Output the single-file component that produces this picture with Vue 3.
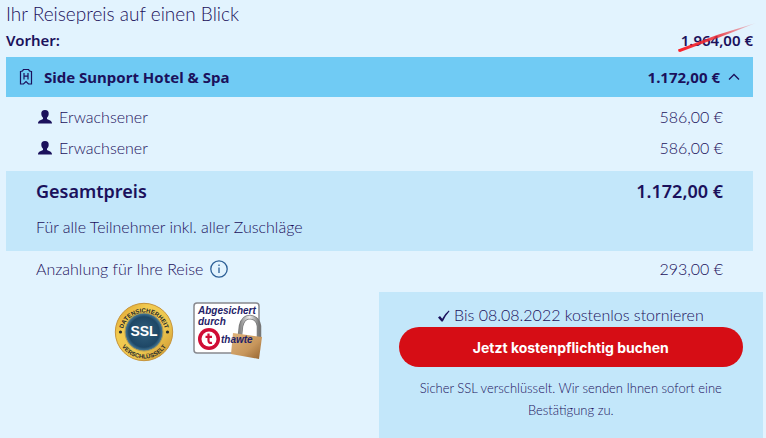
<script setup>
import { ref } from "vue";

const open = ref(true);

const travellers = [
  { name: "Erwachsener", price: "586,00 €" },
  { name: "Erwachsener", price: "586,00 €" },
];
</script>

<template>
  <main class="summary">
    <h1>Ihr Reisepreis auf einen Blick</h1>

    <div class="before">
      <span>Vorher:</span>
      <span class="old-price">
        1.964,00 €
        <svg class="strike" viewBox="0 0 80 32" preserveAspectRatio="none" aria-hidden="true">
          <defs>
            <linearGradient id="strike-fade">
              <stop offset="0" stop-color="#fa2028" />
              <stop offset="0.55" stop-color="#ec2b35" stop-opacity="0.8" />
              <stop offset="1" stop-color="#ec2b35" stop-opacity="0.1" />
            </linearGradient>
          </defs>
          <path d="M1 27.5L40 13L79 1L42 15.5L3 30Q1 30 1 27.5Z" fill="url(#strike-fade)" />
        </svg>
      </span>
    </div>

    <button class="hotel" type="button" :aria-expanded="open" @click="open = !open">
      <svg class="hotel-icon" viewBox="0 0 14 18" aria-hidden="true">
        <path d="M1.5 16V3.5Q4 3.5 4.5 1.5H9.5Q10 3.5 12.5 3.5V16H9.5L7 13.5L4.5 16Z" />
        <path d="M5 5V11.5M9 5V11.5M5 8.2H9" />
      </svg>
      <span class="hotel-name">Side Sunport Hotel &amp; Spa</span>
      <span>1.172,00 €</span>
      <svg class="chevron" :class="{ closed: !open }" viewBox="0 0 12 8" aria-hidden="true">
        <path d="M1 6.5L6 1.5L11 6.5" />
      </svg>
    </button>

    <ul v-if="open" class="travellers">
      <li v-for="(person, index) in travellers" :key="index">
        <svg class="person" viewBox="0 0 14 14" aria-hidden="true">
          <path d="M7 0C9.6 0 10.9 1.6 10.7 4C10.6 5.8 9.8 7 9 7.8V9C9.8 10 14 9.8 14 13.5H0C0 9.8 4.2 10 5 9V7.8C4.2 7 3.4 5.8 3.3 4C3.1 1.6 4.4 0 7 0Z" />
        </svg>
        <span class="person-name">{{ person.name }}</span>
        <span>{{ person.price }}</span>
      </li>
    </ul>

    <section class="total">
      <div class="total-row">
        <h2>Gesamtpreis</h2>
        <strong>1.172,00 €</strong>
      </div>
      <p>Für alle Teilnehmer inkl. aller Zuschläge</p>
    </section>

    <div class="deposit">
      <span>Anzahlung für Ihre Reise</span>
      <button class="info" type="button" aria-label="Info">
        <svg viewBox="0 0 18 18" aria-hidden="true">
          <circle cx="9" cy="9" r="8.2" />
          <path d="M9 7.5V13M9 4.5V6" />
        </svg>
      </button>
      <span class="deposit-price">293,00 €</span>
    </div>

    <div class="bottom">
      <div class="seals">
        <svg class="ssl" viewBox="0 0 60 60">
          <defs>
            <linearGradient id="gold" x1="0" y1="0" x2="1" y2="1">
              <stop offset="0" stop-color="#d99a28" />
              <stop offset="0.3" stop-color="#f2cb50" />
              <stop offset="0.65" stop-color="#ecc64f" />
              <stop offset="1" stop-color="#c98c2a" />
            </linearGradient>
            <radialGradient id="navy">
              <stop offset="0" stop-color="#315f7d" />
              <stop offset="0.8" stop-color="#1e4766" />
              <stop offset="1" stop-color="#477c9b" />
            </radialGradient>
            <path id="arc-top" d="M8.5 32A21.5 21.5 0 1 1 51.5 32" />
            <path id="arc-bottom" d="M3.5 30A26.5 26.5 0 0 0 56.5 30" />
          </defs>
          <circle cx="30" cy="30" r="28.7" fill="url(#gold)" stroke="#c6943c" />
          <circle cx="30" cy="30" r="19" fill="url(#navy)" stroke="#b39a50" />
          <text class="ring-text"><textPath href="#arc-top" startOffset="50%">DATENSICHERHEIT</textPath></text>
          <text class="ring-text"><textPath href="#arc-bottom" startOffset="50%">VERSCHLÜSSELT</textPath></text>
          <circle cx="6.5" cy="30" r="1.6" fill="#252a2c" />
          <circle cx="53.5" cy="30" r="1.6" fill="#252a2c" />
          <text class="ssl-text" x="30" y="34">SSL</text>
        </svg>

        <svg class="thawte" viewBox="0 0 70 58">
          <defs>
            <linearGradient id="brass" x1="0" y1="0" x2="1" y2="1">
              <stop offset="0" stop-color="#e0b47c" />
              <stop offset="0.6" stop-color="#c7965c" />
              <stop offset="1" stop-color="#94632f" />
            </linearGradient>
            <linearGradient id="steel">
              <stop offset="0" stop-color="#858585" />
              <stop offset="0.5" stop-color="#eeeeee" />
              <stop offset="1" stop-color="#777777" />
            </linearGradient>
          </defs>
          <rect x="1" y="1" width="65" height="50" rx="3" fill="#fff" stroke="#88898f" stroke-width="1.5" />
          <path d="M47 33L48 24Q50 15 57 15Q65 16 66 24V36" fill="none" stroke="#777" stroke-width="4.5" />
          <path d="M47 33L48 24Q50 15 57 15Q65 16 66 24V36" fill="none" stroke="url(#steel)" stroke-width="3" />
          <path d="M40 31L69 35L66 57L38 52Z" fill="url(#brass)" />
          <circle cx="16" cy="37" r="11" fill="#d00c35" />
          <circle cx="16" cy="37" r="7.5" fill="#fff" />
          <path d="M15.5 31.5V38.5Q15.5 41.5 19 40.8M12.5 34.8H19" fill="none" stroke="#d00c35" stroke-width="2.2" />
          <text class="seal-text" x="5" y="12">Abgesichert</text>
          <text class="seal-text" x="5" y="23">durch</text>
          <text class="seal-text" x="28" y="41">thawte</text>
        </svg>
      </div>

      <section class="booking">
        <p class="cancel">
          <svg class="check" viewBox="0 0 12 12" aria-hidden="true">
            <path d="M0 7.5L2 6L4.2 8.7Q6.5 4 10.8 .5L11.5 1.2Q7 6 4.8 11.5H3.5Z" />
          </svg>
          Bis 08.08.2022 kostenlos stornieren
        </p>
        <button class="book" type="button">Jetzt kostenpflichtig buchen</button>
        <p class="note">Sicher SSL verschlüsselt. Wir senden Ihnen sofort eine Bestätigung zu.</p>
      </section>
    </div>
  </main>
</template>

<style>
body {
  margin: 0;
  background: #e2f3fe;
}
</style>

<style scoped>
.summary {
  padding: 0 13px 0 6px;
  color: #1b115c;
  font-family: Lato, "Noto Sans", sans-serif;
  font-size: 16px;
  font-weight: 300;
  line-height: 24px;
}

h1, h2, p, ul {
  margin: 0;
  padding: 0;
}

h1 {
  font-size: 19px;
  font-weight: 300;
  line-height: 28px;
}

button {
  border: 0;
  padding: 0;
  color: inherit;
  font: inherit;
  cursor: pointer;
}

.before,
.hotel,
.total-row {
  font-family: "Noto Sans", sans-serif;
  font-weight: 600;
}

.before {
  display: flex;
  justify-content: space-between;
  padding-bottom: 4px;
  font-size: 15px;
  line-height: 25px;
}

.old-price {
  position: relative;
}

.strike {
  position: absolute;
  top: -6px;
  right: -4px;
  width: 80px;
  height: 32px;
}

.hotel {
  display: flex;
  align-items: center;
  width: 100%;
  height: 40px;
  padding: 0 13px;
  background: #70cbf4;
  font-size: 15px;
  font-weight: 700;
}

.hotel-icon {
  width: 14px;
  height: 18px;
  margin-right: 11px;
  fill: none;
  stroke: #1b115c;
  stroke-width: 1.2;
}

.hotel-name {
  flex: 1;
  text-align: left;
}

.chevron {
  width: 12px;
  height: 8px;
  margin-left: 8px;
  fill: none;
  stroke: #1b115c;
  stroke-width: 1.3;
}

.closed {
  transform: rotate(180deg);
}

.travellers {
  padding: 4px 30px 8px;
  list-style: none;
}

.travellers li {
  display: flex;
  align-items: center;
  height: 31px;
}

.person {
  width: 14px;
  height: 14px;
  margin: 0 7px 0 2px;
  fill: #1b115c;
}

.person-name {
  flex: 1;
}

.total {
  padding: 8px 30px 12px;
  background: #c3e7fa;
}

.total-row {
  display: flex;
  justify-content: space-between;
  margin-bottom: 12px;
}

h2, strong {
  font-size: 18px;
  font-weight: 600;
}

.deposit {
  display: flex;
  align-items: center;
  height: 36px;
  padding: 0 30px;
}

.info {
  width: 18px;
  height: 18px;
  margin-left: 7px;
  background: none;
}

.info svg {
  display: block;
  fill: none;
  stroke: #2c5f96;
  stroke-width: 1.3;
}

.deposit-price {
  margin-left: auto;
}

.bottom {
  display: grid;
  grid-template-columns: 1fr calc(50% + 3px);
  margin: 5px -10px 0 -6px;
}

.seals {
  display: flex;
  justify-content: center;
  gap: 19px;
  padding: 10px 2px 0 0;
}

.ssl {
  width: 60px;
  height: 60px;
}

.thawte {
  width: 70px;
  height: 58px;
}

.ring-text {
  fill: #252a2c;
  font: 700 6px "Liberation Sans", Arial, sans-serif;
  text-anchor: middle;
}

.ssl-text {
  fill: #fff;
  font: 700 14px "Liberation Sans", Arial, sans-serif;
  text-anchor: middle;
}

.seal-text {
  fill: #1f2268;
  font: italic 700 10px "Liberation Sans", Arial, sans-serif;
}

.booking {
  padding: 11px 20px 17px;
  background: #c3e7fa;
  text-align: center;
}

.cancel {
  line-height: 24px;
}

.check {
  width: 12px;
  height: 12px;
  vertical-align: -1px;
  fill: #1b115c;
}

.book {
  display: block;
  width: 100%;
  height: 40px;
  border-radius: 20px;
  background: #d60d15;
  color: #fff;
  font: 700 14px Inter, sans-serif;
}

.note {
  margin-top: 10px;
  font-size: 13px;
  line-height: 22px;
}
</style>
